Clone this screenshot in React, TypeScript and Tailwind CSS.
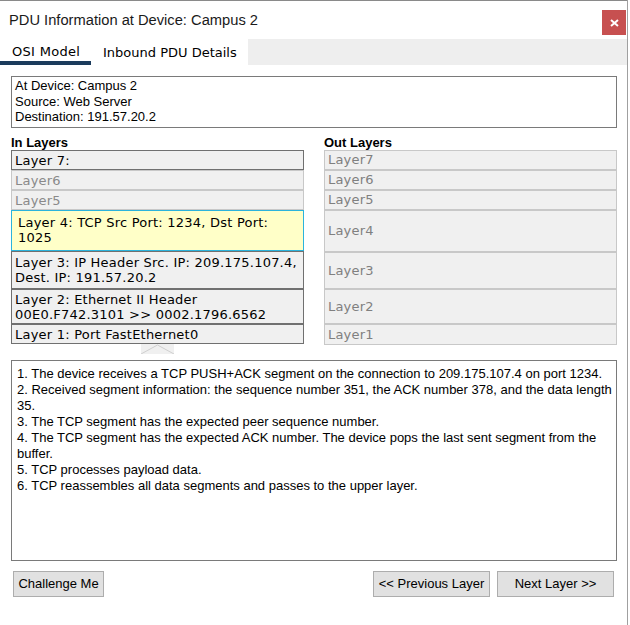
import React from "react";

const dv = { fontFamily: '"DejaVu Sans", Verdana, sans-serif' };
const ar = { fontFamily: '"Liberation Sans", Arial, sans-serif' };

type Row = { h: string; lines: string[]; kind: "dark" | "light" | "active" };

const inRows: Row[] = [
  { h: "h-[20px]", lines: ["Layer 7:"], kind: "dark" },
  { h: "h-[20px]", lines: ["Layer6"], kind: "light" },
  { h: "h-[20px]", lines: ["Layer5"], kind: "light" },
  { h: "h-[41px]", lines: ["Layer 4: TCP Src Port: 1234, Dst Port:", "1025"], kind: "active" },
  { h: "h-[38px]", lines: ["Layer 3: IP Header Src. IP: 209.175.107.4,", "Dest. IP: 191.57.20.2"], kind: "dark" },
  { h: "h-[35px]", lines: ["Layer 2: Ethernet II Header", "00E0.F742.3101 >> 0002.1796.6562"], kind: "dark" },
  { h: "h-[20px]", lines: ["Layer 1: Port FastEthernet0"], kind: "dark" },
];

const outRows = [
  { h: "h-[20px]", t: "Layer7" },
  { h: "h-[20px]", t: "Layer6" },
  { h: "h-[20px]", t: "Layer5" },
  { h: "h-[42px]", t: "Layer4" },
  { h: "h-[37px]", t: "Layer3" },
  { h: "h-[35px]", t: "Layer2" },
  { h: "h-[21px]", t: "Layer1" },
];

const descLines = [
  "1. The device receives a TCP PUSH+ACK segment on the connection to 209.175.107.4 on port 1234.",
  "2. Received segment information: the sequence number 351, the ACK number 378, and the data length",
  "35.",
  "3. The TCP segment has the expected peer sequence number.",
  "4. The TCP segment has the expected ACK number. The device pops the last sent segment from the",
  "buffer.",
  "5. TCP processes payload data.",
  "6. TCP reassembles all data segments and passes to the upper layer.",
];

function InBox({ r }: { r: Row }) {
  let cls = "";
  if (r.kind === "dark") cls = "border-[#707070] bg-[#f0f0f0] text-black pl-[3px] justify-center";
  if (r.kind === "light") cls = "border-[#c8c8c8] bg-[#f0f0f0] text-[#8a8a8a] pl-[3px] justify-center";
  if (r.kind === "active") cls = "border-[#2bb3dc] bg-[#ffffc8] text-black pl-[6px] pt-[4px]";
  return (
    <div
      className={`${r.h} border flex flex-col ${cls} text-[13px] leading-[15px] tracking-[0.22px] whitespace-nowrap`}
      style={dv}
    >
      {r.lines.map((l, i) => (
        <div key={i}>{l}</div>
      ))}
    </div>
  );
}

export default function App() {
  return (
    <div className="w-[630px] h-[625px] bg-white flex overflow-hidden">
      <div className="w-[627px] h-full border-t border-[#8a8a8a] flex flex-col">
        {/* title bar */}
        <div className="h-[38px] flex justify-between pl-[9px] pr-[1px]">
          <div className="text-[14.7px] text-[#1a1a1a] self-center mt-[1px]" style={ar}>
            PDU Information at Device: Campus 2
          </div>
          <div className="w-[24px] h-[25px] mt-[9px] bg-[#c75050] flex items-center justify-center">
            <svg width="9" height="8" viewBox="0 0 9 8">
              <path d="M1 1 L8 7 M8 1 L1 7" stroke="white" strokeWidth="2" />
            </svg>
          </div>
        </div>
        {/* tabs */}
        <div className="h-[26px] flex text-[13px] text-black" style={dv}>
          <div className="w-[91px] h-full flex items-center pl-[12px] pt-[4px] border-b-[4px] border-[#1b3b5c] tracking-[0.3px]">
            OSI Model
          </div>
          <div className="w-[157px] h-full flex items-center pl-[12px] pt-[2px]">Inbound PDU Details</div>
          <div className="flex-1 bg-[#eeeeee]" />
        </div>
        {/* info box */}
        <div className="ml-[11px] mr-[10px] mt-[11px] h-[52px] border border-[#7a7a7a] pl-[3px] pt-[1px] text-[13px] leading-[15.5px] text-black" style={ar}>
          <div>At Device: Campus 2</div>
          <div>Source: Web Server</div>
          <div>Destination: 191.57.20.2</div>
        </div>
        {/* layers */}
        <div className="ml-[11px] mr-[10px] mt-[8px] flex gap-[20px]">
          <div className="w-[293px] flex flex-col">
            <div className="h-[14px] text-[13px] leading-[14px] font-bold text-black" style={ar}>In Layers</div>
            {inRows.map((r, i) => (
              <InBox key={i} r={r} />
            ))}
            <div className="h-[10px] flex pl-[130px]">
              <svg width="33" height="10" viewBox="0 0 33 10">
                <rect x="0" y="0" width="33" height="10" fill="#f0f0f0" />
                <path d="M0 10 L16.5 1 L33 10" fill="none" stroke="#cfcfcf" strokeWidth="1" />
              </svg>
            </div>
          </div>
          <div className="w-[293px] flex flex-col">
            <div className="h-[14px] text-[13px] leading-[14px] font-bold text-black" style={ar}>Out Layers</div>
            {outRows.map((r, i) => (
              <div
                key={i}
                className={`${r.h} border border-[#c8c8c8] bg-[#f0f0f0] text-[#808080] pl-[3px] flex items-center text-[13px] tracking-[0.2px]`}
                style={dv}
              >
                {r.t}
              </div>
            ))}
          </div>
        </div>
        {/* description */}
        <div className="ml-[11px] mr-[10px] mt-[6px] h-[201px] border border-[#7a7a7a] pl-[5px] pt-[5px] text-[13px] leading-[16px] text-black" style={ar}>
          {descLines.map((l, i) => (
            <div key={i} className="whitespace-nowrap">{l}</div>
          ))}
        </div>
        {/* buttons */}
        <div className="mt-[10px] flex pl-[13px] pr-[13px] text-[13px] text-black" style={ar}>
          <div className="w-[91px] h-[26px] border border-[#adadad] bg-[#e1e1e1] flex items-center justify-center">
            Challenge Me
          </div>
          <div className="flex-1" />
          <div className="w-[117px] h-[26px] border border-[#adadad] bg-[#e1e1e1] flex items-center justify-center">
            &lt;&lt; Previous Layer
          </div>
          <div className="w-[117px] h-[26px] ml-[7px] border border-[#adadad] bg-[#e1e1e1] flex items-center justify-center">
            Next Layer &gt;&gt;
          </div>
        </div>
      </div>
      <div className="w-px h-full bg-[#a0a0a0]" />
      <div className="w-[2px] h-full bg-white" />
    </div>
  );
}
